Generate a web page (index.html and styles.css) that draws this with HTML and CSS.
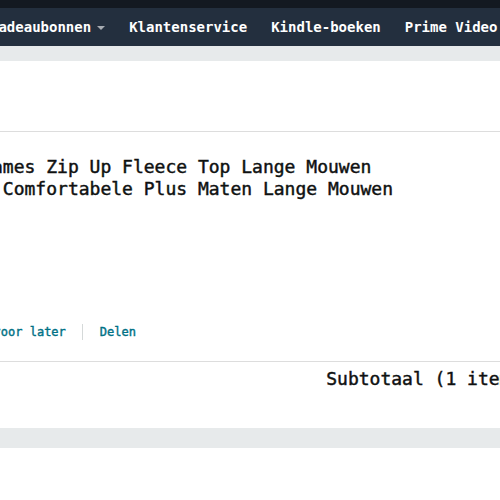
FILE: index.html
```html
<!DOCTYPE html>
<html lang="nl">
<head>
<meta charset="utf-8">
<title>Winkelwagen</title>
<link rel="stylesheet" href="styles.css">
</head>
<body>
<header class="site-header">
  <div class="topbar"></div>
  <nav class="nav">
    <ul class="nav-list">
      <li class="nav-item">Cadeaubonnen<span class="caret"></span></li>
      <li class="nav-item">Klantenservice</li>
      <li class="nav-item">Kindle-boeken</li>
      <li class="nav-item">Prime Video</li>
      <li class="nav-item">Aanbiedingen</li>
    </ul>
  </nav>
</header>
<div class="band"></div>
<main class="cart">
  <div class="cart-head"></div>
  <section class="cart-item">
    <div class="item-body">
      <h2 class="item-title">Trui Dames Zip Up Fleece Top Lange Mouwen Winter Comfortabele Plus Maten Lange Mouwen</h2>
      <ul class="actions">
        <li class="action"><a href="#">Bewaar voor later</a></li>
        <li class="action"><a href="#">Delen</a></li>
      </ul>
    </div>
  </section>
  <div class="cart-foot">
    <div class="subtotal">Subtotaal (1 item): <b>€24,99</b></div>
  </div>
</main>
<div class="band band-bottom"></div>
</body>
</html>
```
FILE: styles.css
```css
html, body {
  margin: 0;
  padding: 0;
  overflow: hidden;
  background: #fff;
  font-family: "DejaVu Sans Mono", "Liberation Mono", monospace;
  color: #0f1111;
}

.topbar {
  height: 8px;
  background: #131921;
}

.nav {
  height: 38px;
  background: #232f3e;
  display: flex;
  align-items: center;
  overflow: hidden;
}

.nav-list {
  list-style: none;
  margin: 0 0 0 -22px;
  padding: 0;
  display: flex;
  flex-shrink: 0;
}

.nav-item {
  padding: 0 12px;
  color: #fff;
  font-size: 14px;
  font-weight: bold;
  line-height: 16px;
  white-space: nowrap;
  display: flex;
  align-items: center;
}

.caret {
  display: inline-block;
  margin-left: 6px;
  margin-top: 2px;
  border-left: 4px solid transparent;
  border-right: 4px solid transparent;
  border-top: 4px solid #a7acb2;
}

.band {
  height: 15px;
  background: #e7eaeb;
}

.band-bottom {
  height: 20px;
}

.cart {
  margin-left: -73px;
  width: 681px;
}

.cart-head {
  height: 70px;
  border-bottom: 1px solid #dddddd;
  margin-left: -200px;
  margin-right: -200px;
}

.cart-item {
  padding: 24px 200px 21px;
  border-bottom: 1px solid #dddddd;
  margin-left: -200px;
  margin-right: -200px;
}

.item-title {
  margin: 0;
  max-width: 473px;
  font-size: 18px;
  line-height: 22px;
  font-weight: normal;
  -webkit-text-stroke: 0.45px currentColor;
}

.actions {
  list-style: none;
  margin: 124px 0 0;
  padding: 0;
  display: flex;
  align-items: center;
}

.action {
  padding: 0 16px;
  font-size: 12px;
  line-height: 16px;
}

.action + .action {
  padding-left: 17px;
  border-left: 1px solid #d5d9d9;
}

.action a {
  color: #007185;
  text-decoration: none;
  -webkit-text-stroke: 0.4px currentColor;
}

.cart-foot {
  padding: 5px 0 37px;
  display: flex;
  justify-content: flex-end;
}

.subtotal {
  font-size: 18px;
  line-height: 24px;
  white-space: nowrap;
  -webkit-text-stroke: 0.45px currentColor;
}
```
